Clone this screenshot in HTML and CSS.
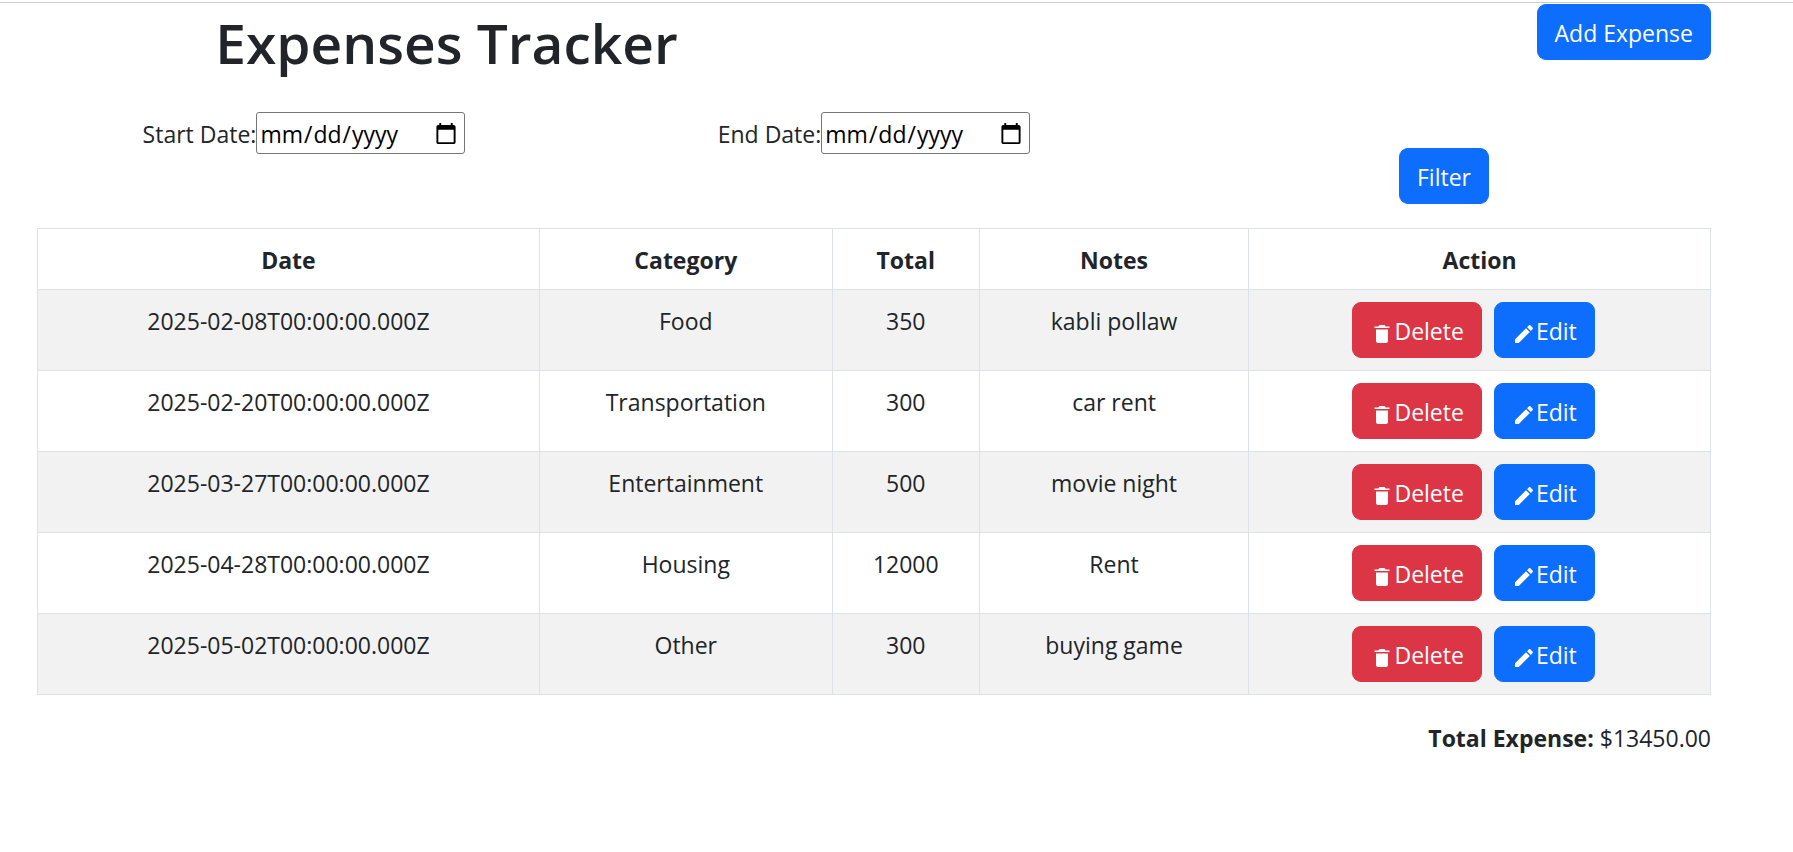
FILE: index.html
```html
<!DOCTYPE html>
<html lang="en">
<head>
<meta charset="utf-8">
<title>Expenses Tracker</title>
<link rel="stylesheet" href="styles.css">
</head>
<body>
<svg class="sprite" aria-hidden="true">
  <symbol id="trash" viewBox="0 0 512 512"><path d="M128 405.429C128 428.846 147.198 448 170.667 448h170.667C364.802 448 384 428.846 384 405.429V160H128v245.429zM416 96h-80l-26.785-32H202.786L176 96H96v32h320V96z"/></symbol>
  <symbol id="pencil" viewBox="0 0 512 512"><path d="M64 368v80h80l235.727-235.729-79.999-79.998L64 368zm377.602-217.602c8.531-8.531 8.531-21.334 0-29.865l-50.135-50.135c-8.531-8.531-21.334-8.531-29.865 0l-39.468 39.469 79.999 79.998 39.469-39.467z"/></symbol>
</svg>
<main class="page">
  <header class="row header">
    <h1 class="title">Expenses Tracker</h1>
    <div class="header-action"><button class="btn btn-primary" type="button">Add Expense</button></div>
  </header>
  <form class="row filters">
    <div class="filter-col"><label for="start">Start Date:</label><input class="date" type="date" id="start"></div>
    <div class="filter-col"><label for="end">End Date:</label><input class="date" type="date" id="end"></div>
    <div class="filter-col filter-submit"><button class="btn btn-primary" type="button">Filter</button></div>
  </form>
  <table class="table">
    <colgroup><col class="c-date"><col class="c-category"><col class="c-total"><col class="c-notes"><col class="c-action"></colgroup>
    <thead>
      <tr><th>Date</th><th>Category</th><th>Total</th><th>Notes</th><th>Action</th></tr>
    </thead>
    <tbody>
      <tr><td>2025-02-08T00:00:00.000Z</td><td>Food</td><td>350</td><td>kabli pollaw</td>
        <td class="action"><div class="buttons"><button class="btn btn-danger" type="button"><svg class="icon"><use href="#trash"/></svg>Delete</button><button class="btn btn-primary" type="button"><svg class="icon"><use href="#pencil"/></svg>Edit</button></div></td></tr>
      <tr><td>2025-02-20T00:00:00.000Z</td><td>Transportation</td><td>300</td><td>car rent</td>
        <td class="action"><div class="buttons"><button class="btn btn-danger" type="button"><svg class="icon"><use href="#trash"/></svg>Delete</button><button class="btn btn-primary" type="button"><svg class="icon"><use href="#pencil"/></svg>Edit</button></div></td></tr>
      <tr><td>2025-03-27T00:00:00.000Z</td><td>Entertainment</td><td>500</td><td>movie night</td>
        <td class="action"><div class="buttons"><button class="btn btn-danger" type="button"><svg class="icon"><use href="#trash"/></svg>Delete</button><button class="btn btn-primary" type="button"><svg class="icon"><use href="#pencil"/></svg>Edit</button></div></td></tr>
      <tr><td>2025-04-28T00:00:00.000Z</td><td>Housing</td><td>12000</td><td>Rent</td>
        <td class="action"><div class="buttons"><button class="btn btn-danger" type="button"><svg class="icon"><use href="#trash"/></svg>Delete</button><button class="btn btn-primary" type="button"><svg class="icon"><use href="#pencil"/></svg>Edit</button></div></td></tr>
      <tr><td>2025-05-02T00:00:00.000Z</td><td>Other</td><td>300</td><td>buying game</td>
        <td class="action"><div class="buttons"><button class="btn btn-danger" type="button"><svg class="icon"><use href="#trash"/></svg>Delete</button><button class="btn btn-primary" type="button"><svg class="icon"><use href="#pencil"/></svg>Edit</button></div></td></tr>
    </tbody>
  </table>
  <p class="summary"><strong>Total Expense:</strong> $13450.00</p>
</main>
</body>
</html>
```
FILE: styles.css
```css
* { box-sizing: border-box; }

body {
  margin: 0;
  padding-top: 2px;
  background: #fff;
  color: #212529;
  font-family: "Segoe UI", "Open Sans", "Noto Sans", sans-serif;
  font-size: 23px;
  line-height: 36px;
}

.sprite { display: none; }

.page {
  padding: 1px 82px 24px 37px;
  border-top: 1px solid #ccc;
}

.row {
  display: flex;
  margin: 0 -18px;
}

.header { margin-bottom: 24px; }

.title {
  width: 50%;
  margin: 0 0 6px;
  font-size: 55px;
  font-weight: 600;
  line-height: 78px;
  text-align: center;
}

.header-action {
  width: 50%;
  padding-right: 18px;
  text-align: right;
}

.filters { margin-bottom: 24px; }

.filter-col {
  flex: 1;
  text-align: center;
}

.filter-submit { padding-top: 36px; }

.date {
  width: 209px;
  height: 42px;
  margin: 0;
  padding: 3px 4px 1px 2px;
  border: 1px solid #767676;
  border-radius: 3px;
  background: #fff;
  color: #000;
  font: inherit;
}

.date::-webkit-calendar-picker-indicator {
  width: 24px;
  height: 24px;
}

.btn {
  height: 56px;
  padding: 10px 17px 8px;
  border: 1px solid transparent;
  border-radius: 9px;
  color: #fff;
  font: inherit;
  vertical-align: top;
  cursor: pointer;
}

.btn-primary { background: #0d6efd; border-color: #0d6efd; }
.btn-danger { background: #dc3545; border-color: #dc3545; }

.icon {
  width: 24px;
  height: 24px;
  fill: currentColor;
  vertical-align: middle;
}

.table {
  width: 100%;
  margin: 0 0 24px;
  border-collapse: collapse;
  table-layout: fixed;
  text-align: center;
}

.c-date { width: 30%; }
.c-category { width: 17.5%; }
.c-total { width: 8.8%; }
.c-notes { width: 16.1%; }
.c-action { width: 27.6%; }

.table th,
.table td {
  padding: 13px 12px 11px;
  border: 1px solid #dee2e6;
  vertical-align: top;
}

.table th { font-weight: 700; }
.table .action { padding: 12px; }
.table tbody tr:nth-child(odd) { background: #f2f2f2; }

.buttons {
  display: flex;
  justify-content: center;
}

.buttons .btn { margin-right: 12px; }

.summary {
  margin: 0;
  padding-top: 1px;
  text-align: right;
}
```
